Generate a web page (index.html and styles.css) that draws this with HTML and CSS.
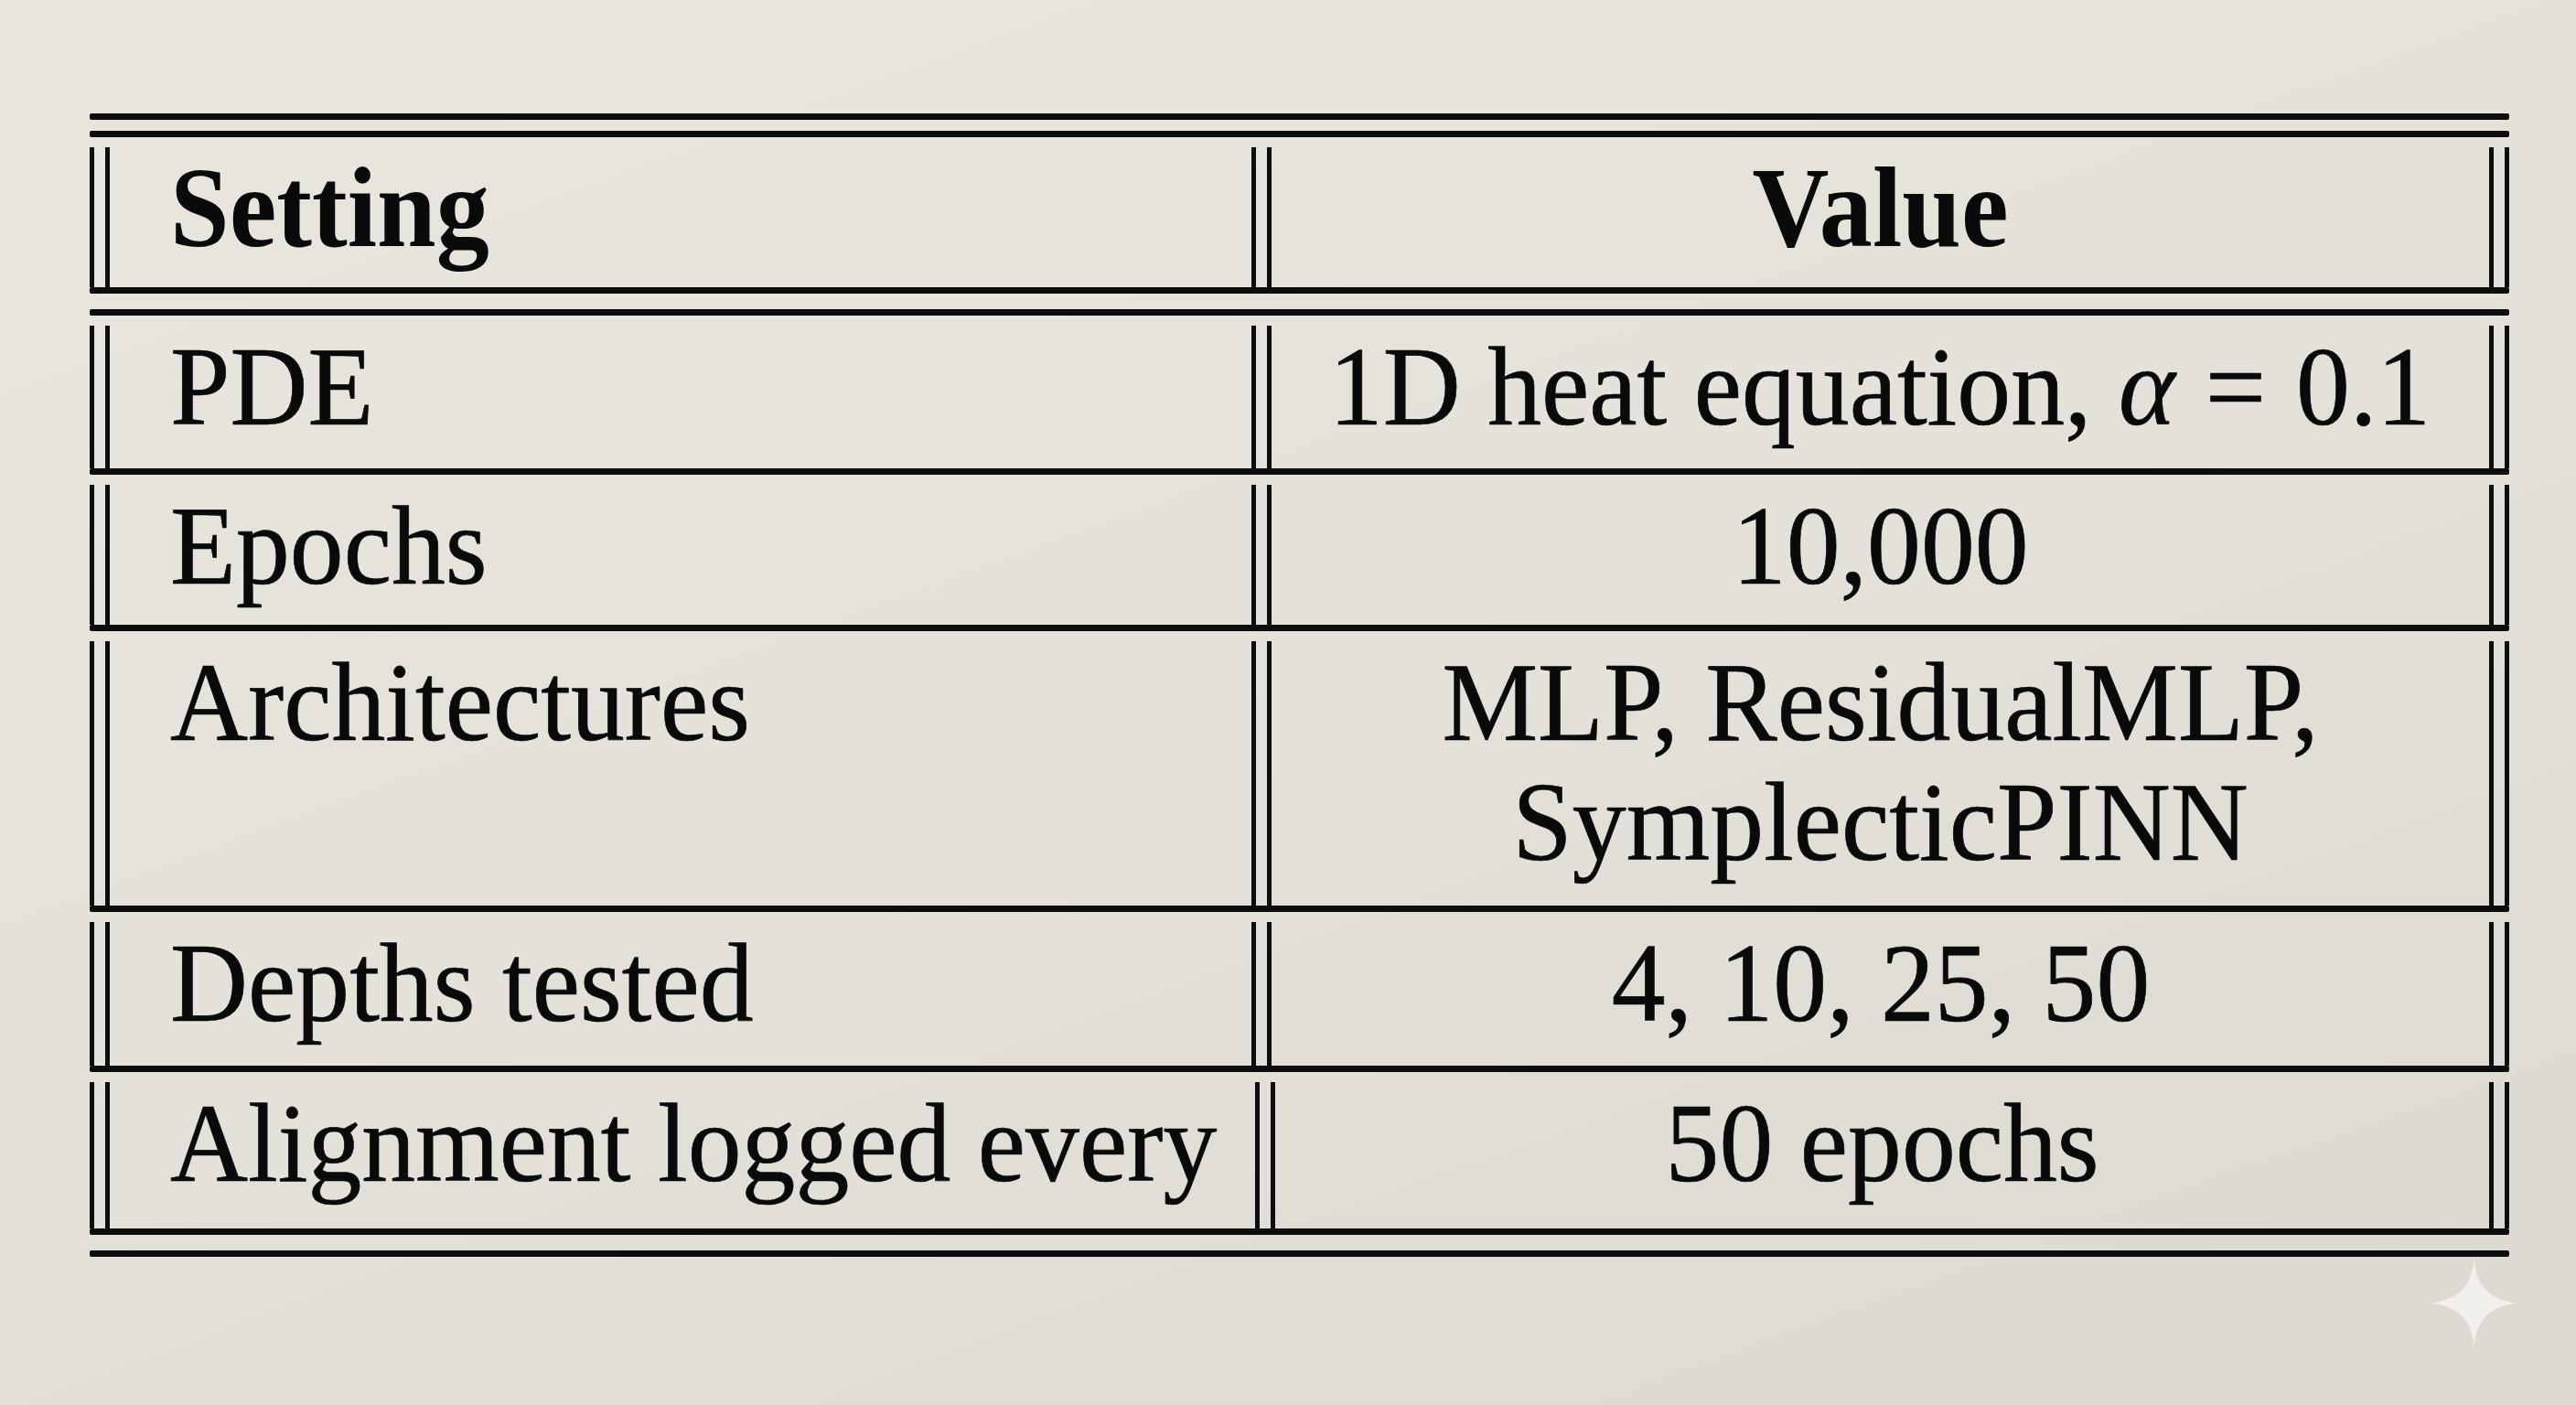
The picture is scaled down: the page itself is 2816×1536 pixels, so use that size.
FILE: index.html
```html
<!DOCTYPE html>
<html lang="en">
<head>
<meta charset="utf-8">
<title>Settings table</title>
<link rel="stylesheet" href="styles.css">
</head>
<body>
<div class="page">
  <div class="table">
    <div class="rule"></div>
    <div class="rule rule-second-top"></div>

    <div class="row row-head">
      <div class="vbar"><i></i><i></i></div>
      <div class="cell cell-left"><span class="txt bold">Setting</span></div>
      <div class="vbar"><i></i><i></i></div>
      <div class="cell cell-center"><span class="txt bold">Value</span></div>
      <div class="vbar"><i></i><i></i></div>
    </div>
    <div class="rule"></div>
    <div class="rule rule-second"></div>

    <div class="row row-a">
      <div class="vbar"><i></i><i></i></div>
      <div class="cell cell-left"><span class="txt">PDE</span></div>
      <div class="vbar"><i></i><i></i></div>
      <div class="cell cell-center"><span class="txt">1D heat equation, <span class="math">α</span><span class="rel">=</span>0.1</span></div>
      <div class="vbar"><i></i><i></i></div>
    </div>
    <div class="rule"></div>

    <div class="row row-b">
      <div class="vbar"><i></i><i></i></div>
      <div class="cell cell-left"><span class="txt">Epochs</span></div>
      <div class="vbar"><i></i><i></i></div>
      <div class="cell cell-center"><span class="txt">10,000</span></div>
      <div class="vbar"><i></i><i></i></div>
    </div>
    <div class="rule"></div>

    <div class="row row-tall">
      <div class="vbar"><i></i><i></i></div>
      <div class="cell cell-left"><span class="txt">Architectures</span></div>
      <div class="vbar"><i></i><i></i></div>
      <div class="cell cell-center"><span class="txt">MLP, ResidualMLP,<br>SymplecticPINN</span></div>
      <div class="vbar"><i></i><i></i></div>
    </div>
    <div class="rule"></div>

    <div class="row row-c">
      <div class="vbar"><i></i><i></i></div>
      <div class="cell cell-left"><span class="txt">Depths tested</span></div>
      <div class="vbar"><i></i><i></i></div>
      <div class="cell cell-center"><span class="txt">4, 10, 25, 50</span></div>
      <div class="vbar"><i></i><i></i></div>
    </div>
    <div class="rule"></div>

    <div class="row row-d">
      <div class="vbar"><i></i><i></i></div>
      <div class="cell cell-left"><span class="txt">Alignment logged every</span></div>
      <div class="vbar"><i></i><i></i></div>
      <div class="cell cell-center"><span class="txt">50 epochs</span></div>
      <div class="vbar"><i></i><i></i></div>
    </div>
    <div class="rule"></div>
    <div class="rule rule-second"></div>
  </div>

  <svg class="sparkle" viewBox="0 0 100 100" aria-hidden="true">
    <path d="M50 1 C53 30 66 46 99 50 C66 54 53 70 50 99 C47 70 34 54 1 50 C34 46 47 30 50 1 Z"/>
  </svg>
</div>
</body>
</html>
```

FILE: styles.css
```css
html, body {
  margin: 0;
  padding: 0;
}

body {
  width: 2816px;
  height: 1536px;
  overflow: hidden;
  background: linear-gradient(160deg, #e9e6df 0%, #e5e2db 45%, #dcd9d2 100%);
  font-family: "Liberation Serif", "Times New Roman", serif;
  color: #0a0a0a;
}

.page {
  position: relative;
  width: 2816px;
  height: 1536px;
  padding-top: 124px;
  box-sizing: border-box;
}

.table {
  margin-left: 98px;
  width: 2645px;
  display: flex;
  flex-direction: column;
}

.rule {
  height: 7px;
  background: #0d0d0d;
  border-radius: 2px;
}

.rule-second-top {
  margin-top: 12px;
}

.rule-second {
  margin-top: 17px;
}

.row {
  display: flex;
  align-items: stretch;
}

.row-head { height: 164px; }
.row-a { height: 167px; }
.row-b { height: 164px; }
.row-tall { height: 300px; }
.row-c { height: 168px; }
.row-d { height: 171px; }

.vbar {
  flex: 0 0 22px;
  display: flex;
  justify-content: space-between;
  padding-top: 11px;
}

.vbar i {
  display: block;
  width: 5px;
  background: #0d0d0d;
}

.cell {
  padding-top: 12px;
  font-size: 122px;
  line-height: 131px;
  white-space: nowrap;
}

.cell-left {
  flex: 0 0 1248px;
  padding-left: 66px;
  box-sizing: border-box;
}

.cell-center {
  flex: 1 1 auto;
  text-align: center;
}

.txt {
  display: inline-block;
  transform: scaleX(0.965);
  -webkit-text-stroke: 0.7px #0a0a0a;
}

.cell-left .txt {
  transform-origin: left center;
}

.cell-center .txt {
  transform-origin: center center;
}

.bold {
  font-weight: 700;
  font-size: 125px;
  transform: scaleX(0.93);
  -webkit-text-stroke: 0;
}

.math {
  font-style: italic;
}

.rel {
  margin: 0 0.28em;
}

.sparkle {
  position: absolute;
  left: 2656px;
  top: 1376px;
  width: 97px;
  height: 97px;
}

.sparkle path {
  fill: #f1f0ec;
}
```
